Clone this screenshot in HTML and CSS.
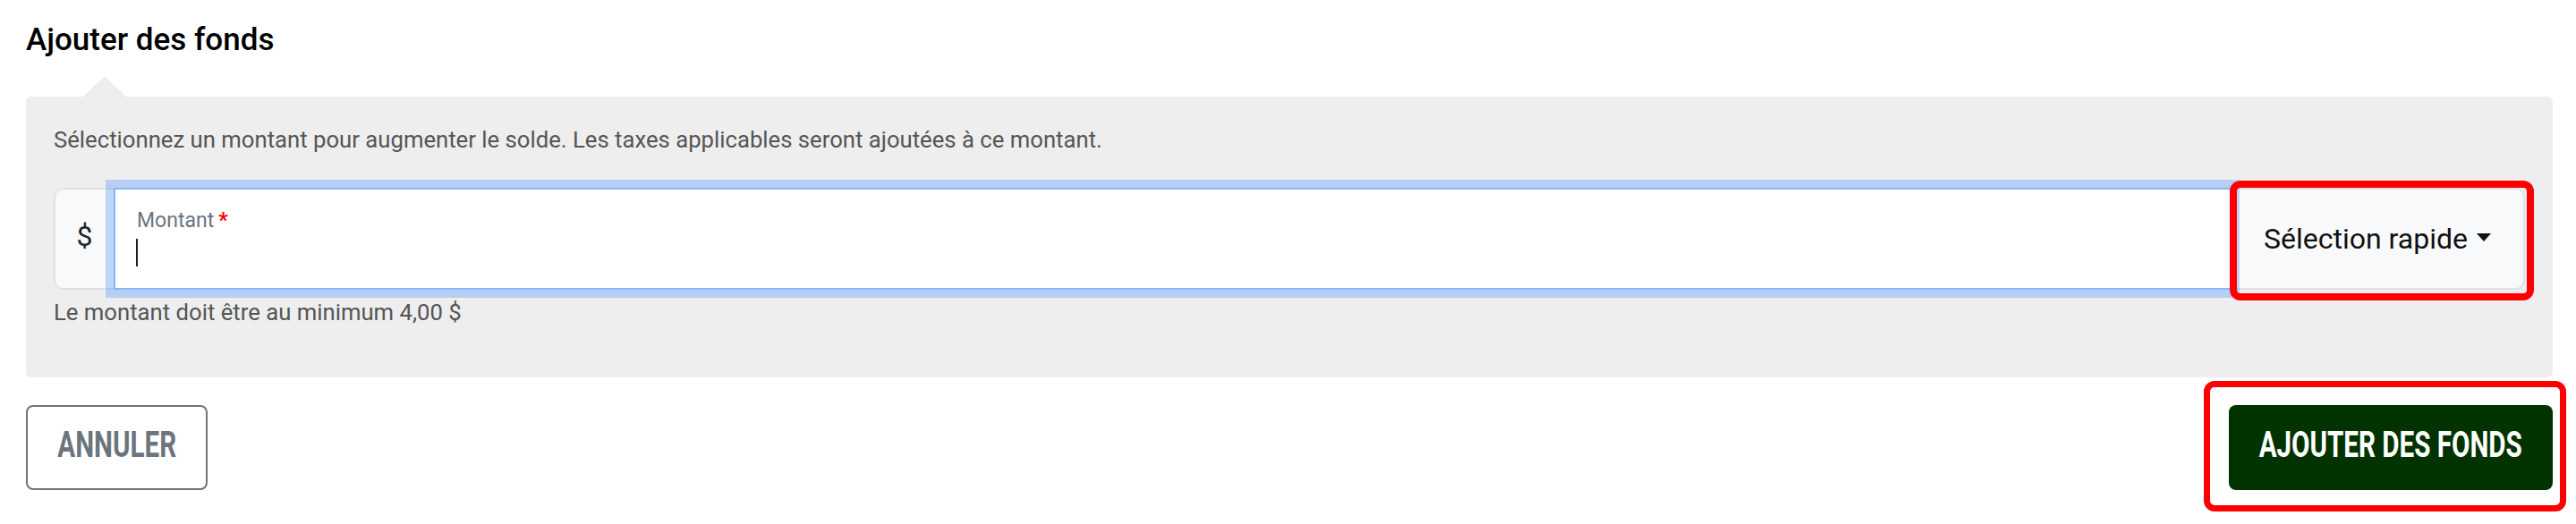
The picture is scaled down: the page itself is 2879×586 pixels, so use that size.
FILE: index.html
```html
<!DOCTYPE html>
<html lang="fr">
<head>
<meta charset="utf-8">
<title>Ajouter des fonds</title>
<link rel="stylesheet" href="styles.css">
</head>
<body>
<div class="page">
  <h2 class="title">Ajouter des fonds</h2>
  <div class="notch"></div>
  <div class="panel">
    <p class="desc">Sélectionnez un montant pour augmenter le solde. Les taxes applicables seront ajoutées à ce montant.</p>
    <div class="input-group">
      <span class="addon">$</span>
      <div class="field">
        <label class="field-label">Montant<span class="req">*</span></label>
        <span class="caret-line"></span>
      </div>
      <div class="quick">
        <button class="quick-btn" type="button">Sélection rapide<span class="dd-caret"></span></button>
        <span class="annot annot-quick"></span>
      </div>
    </div>
    <p class="help">Le montant doit être au minimum 4,00&nbsp;$</p>
  </div>
  <div class="actions">
    <button class="btn btn-cancel" type="button"><span class="btn-text">ANNULER</span></button>
    <div class="submit-wrap">
      <button class="btn btn-submit" type="button"><span class="btn-text">AJOUTER DES FONDS</span></button>
      <span class="annot annot-submit"></span>
    </div>
  </div>
</div>
</body>
</html>
```

FILE: styles.css
```css
html, body {
  margin: 0;
  padding: 0;
  background: #ffffff;
}

body {
  font-family: Roboto, "Liberation Sans", sans-serif;
  color: #212529;
  min-height: 586px;
}

.page {
  padding: 24px 26px 38px 29px;
}

.title {
  margin: 0;
  font-size: 35px;
  font-weight: 500;
  line-height: 42px;
  color: #000000;
}

.notch {
  width: 0;
  height: 0;
  margin: 19px 0 0 64px;
  border-left: 24px solid transparent;
  border-right: 24px solid transparent;
  border-bottom: 23px solid #eeeeee;
}

.panel {
  background: #eeeeee;
  border-radius: 6px;
  padding: 30px 31px 56px 31px;
}

.desc {
  margin: 0;
  font-size: 25.7px;
  line-height: 37px;
  color: #555555;
}

.input-group {
  display: flex;
  height: 114px;
  margin-top: 35px;
}

.addon {
  box-sizing: border-box;
  width: 67px;
  display: flex;
  align-items: center;
  justify-content: center;
  background: #f8f9fa;
  border: 2px solid #dee2e6;
  border-right: 0;
  border-radius: 10px 0 0 10px;
  font-size: 32px;
  color: #212529;
  padding-bottom: 6px;
}

.field {
  flex: 1;
  box-sizing: border-box;
  display: flex;
  flex-direction: column;
  align-items: flex-start;
  padding: 21px 24px 0 24px;
  background: #ffffff;
  border: 2px solid #86b7fe;
  box-shadow: 0 0 0 9px rgba(13, 110, 253, 0.25);
  position: relative;
  z-index: 2;
}

.field-label {
  font-size: 23px;
  line-height: 28px;
  color: #6c757d;
}

.req {
  color: #ff0000;
  margin-left: 5px;
  font-weight: 700;
}

.caret-line {
  display: block;
  width: 2px;
  height: 31px;
  margin-top: 6px;
  margin-left: -1px;
  background: #1e1e1e;
}

.quick {
  position: relative;
  display: flex;
}

.quick-btn {
  box-sizing: border-box;
  height: 100%;
  padding: 0 36px;
  background: #f8f9fa;
  border: 2px solid #dee2e6;
  border-left: 0;
  border-radius: 0 10px 10px 0;
  font-family: Roboto, "Liberation Sans", sans-serif;
  font-size: 32px;
  color: #111111;
  white-space: nowrap;
}

.dd-caret {
  display: inline-block;
  margin-left: 10px;
  vertical-align: 0.255em;
  border-top: 9px solid #111111;
  border-left: 8px solid transparent;
  border-right: 8px solid transparent;
}

.annot {
  position: absolute;
  box-sizing: border-box;
  border: 8px solid #ff0000;
  border-radius: 12px;
  pointer-events: none;
  z-index: 5;
}

.annot-quick {
  top: -8px;
  left: -2px;
  right: -10px;
  bottom: -12px;
}

.help {
  margin: 8px 0 0 0;
  font-size: 25.7px;
  line-height: 34px;
  color: #555555;
}

.actions {
  display: flex;
  justify-content: space-between;
  align-items: flex-start;
  margin-top: 31px;
}

.btn {
  box-sizing: border-box;
  height: 95px;
  display: flex;
  align-items: center;
  justify-content: center;
  padding: 0 0 7px 0;
  margin: 0;
  border-radius: 8px;
  font-family: Roboto, "Liberation Sans", sans-serif;
  font-size: 40px;
  font-weight: 700;
  white-space: nowrap;
}

.btn-text {
  display: inline-block;
  transform: scaleX(0.74);
}

.btn-cancel {
  width: 203px;
  background: #ffffff;
  border: 2px solid #6c757d;
  color: #6c757d;
}

.submit-wrap {
  position: relative;
  display: flex;
  height: 95px;
}

.btn-submit {
  width: 362px;
  background: #003300;
  border: 0;
  color: #ffffff;
}

.annot-submit {
  top: -27px;
  left: -28px;
  width: 405px;
  height: 146px;
  border-width: 7px;
}
```
